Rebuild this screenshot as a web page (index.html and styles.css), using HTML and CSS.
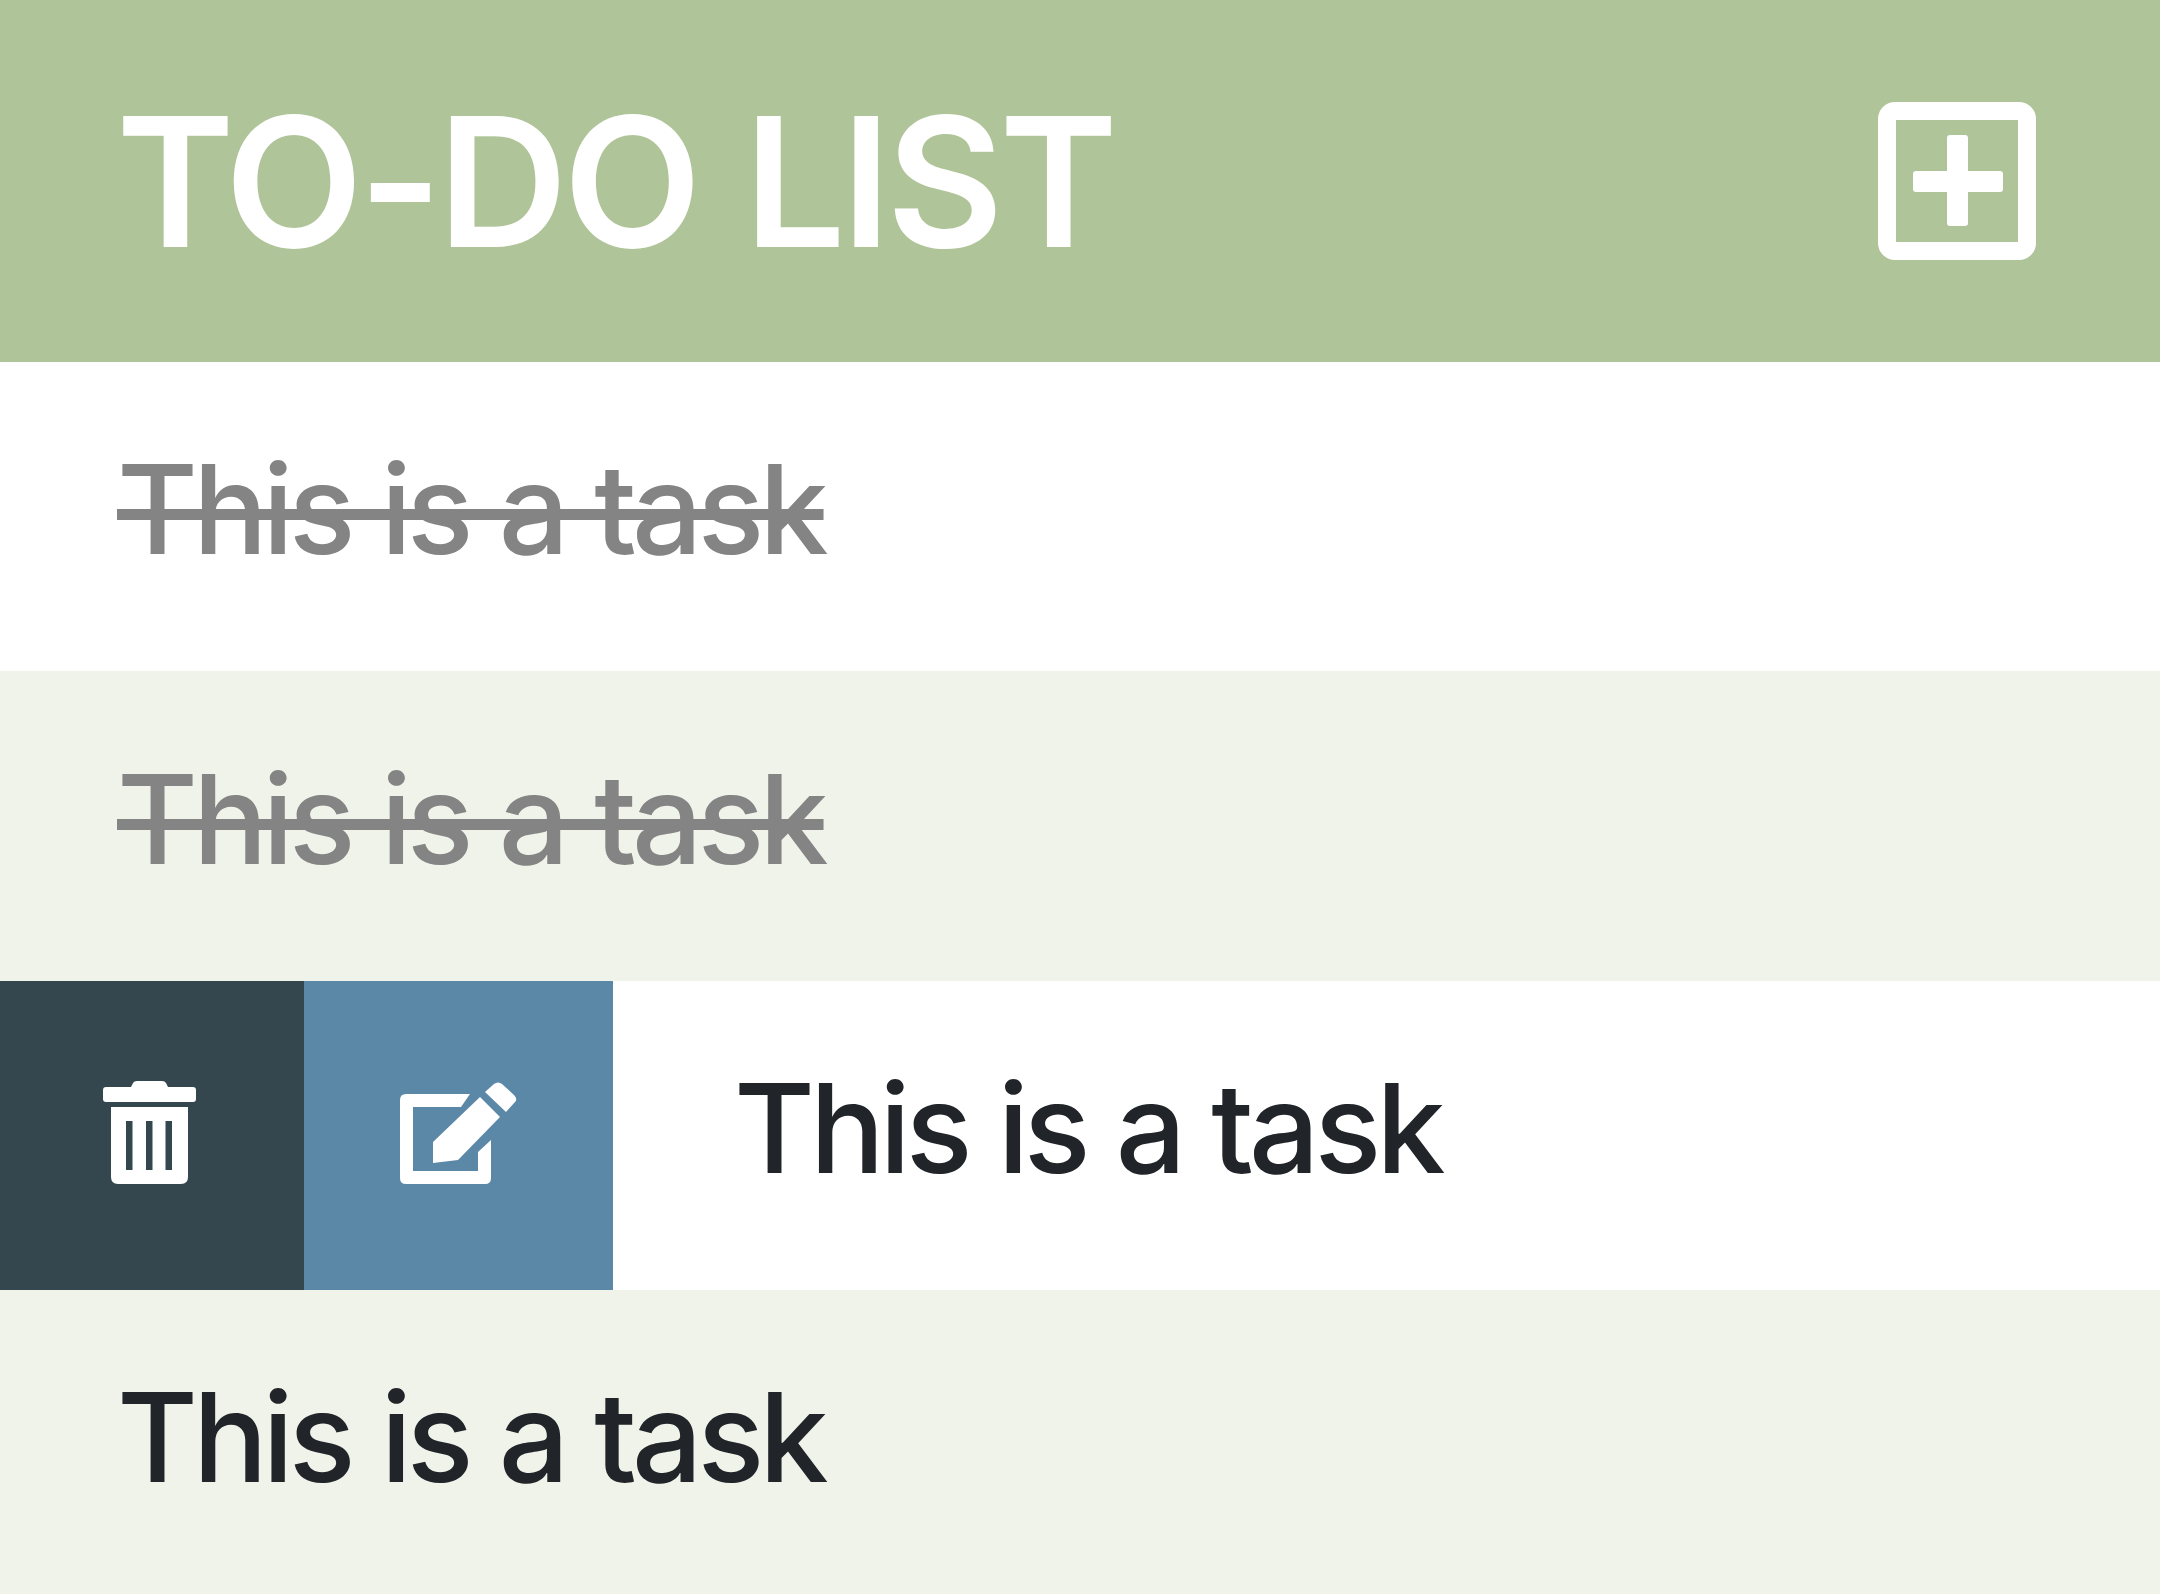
FILE: index.html
```html
<!DOCTYPE html>
<html lang="en">

<head>
  <meta charset="UTF-8">
  <title>To-do list</title>
  <link rel="stylesheet" href="styles.css">
</head>

<body>
  <header class="top">
    <h1>TO-DO LIST</h1>
    <button class="add">
      <svg width="158" height="158" viewBox="0 0 158 158">
        <rect x="9" y="9" width="140" height="140" rx="8" fill="none" stroke="#fff" stroke-width="18" />
        <rect x="35" y="69" width="90" height="21" rx="3" fill="#fff" />
        <rect x="69" y="33" width="21" height="91" rx="3" fill="#fff" />
      </svg>
    </button>
  </header>
  <ul class="list">
    <li class="row done"><span>This is a task</span></li>
    <li class="row alt done"><span>This is a task</span></li>
    <li class="row open">
      <button class="action del">
        <svg width="93" height="103" viewBox="0 0 93 103">
          <path d="M3 6H28L30 2Q31 0 34 0H59Q62 0 63 2L65 6H90Q93 6 93 9V18Q93 21 90 21H3Q0 21 0 18V9Q0 6 3 6Z" fill="#fff" />
          <path fill-rule="evenodd" d="M8 26H85V96Q85 103 78 103H15Q8 103 8 96ZM23 40V89H29.5V40ZM43 40V89H49.5V40ZM62.5 40V89H69V40Z" fill="#fff" />
        </svg>
      </button>
      <button class="action edit">
        <svg width="117" height="103" viewBox="0 0 117 103">
          <path d="M6 13H70L61 26H13V90H78V71L91 59V97Q91 103 85 103H6Q0 103 0 97V19Q0 13 6 13Z" fill="#fff" />
          <path d="M33 61L80 16L100 36L58 79L33 82Z" fill="#fff" />
          <path d="M85 11L94 3Q98 0 102 3L114 14Q118 18 115 21L106 31Z" fill="#fff" />
        </svg>
      </button>
      <span>This is a task</span>
    </li>
    <li class="row alt"><span>This is a task</span></li>
  </ul>
</body>

</html>
```

FILE: styles.css
```css
* {
  box-sizing: border-box;
  margin: 0;
  padding: 0;
}

html,
body {
  height: 100%;
  overflow: hidden;
}

body {
  background-color: white;
  font-family: Inter, "Liberation Sans", sans-serif;
  color: #212529;
}

button {
  border: none;
  background: none;
  display: flex;
  align-items: center;
  justify-content: center;
}

.top {
  height: 362px;
  padding: 0 124px 0 116px;
  background-color: #afc498;
  display: flex;
  align-items: center;
  justify-content: space-between;
}

.top h1 {
  font-size: 180px;
  font-weight: 600;
  letter-spacing: -4.5px;
  word-spacing: 6px;
  color: white;
}

.list {
  list-style: none;
}

.row {
  height: 309.4px;
  padding-left: 117px;
  padding-bottom: 15px;
  display: flex;
  align-items: center;
  font-size: 124px;
  font-weight: 450;
  letter-spacing: -5px;
  word-spacing: 2px;
}

.alt {
  background-color: #f0f3ea;
}

.done span {
  color: #848484;
  text-decoration: line-through;
  text-decoration-thickness: 11px;
}

.open {
  padding-left: 0;
  padding-bottom: 0;
}

.open span {
  padding-bottom: 15px;
}

.action {
  height: 100%;
  flex-shrink: 0;
  padding-bottom: 5px;
}

.del {
  width: 304px;
  padding-right: 5px;
  background-color: #35474e;
}

.edit {
  width: 309px;
  margin-right: 121px;
  background-color: #5c88a8;
}
```
